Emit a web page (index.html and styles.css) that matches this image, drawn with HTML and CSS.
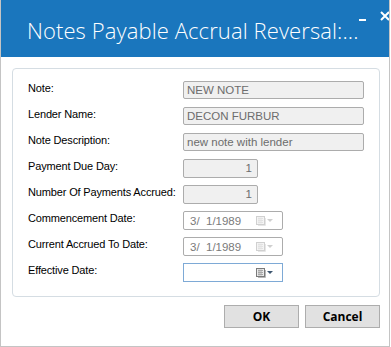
FILE: index.html
```html
<!DOCTYPE html>
<html>
<head>
<meta charset="utf-8">
<link rel="stylesheet" href="styles.css">
</head>
<body>
<div class="window">
  <div class="titlebar">
    <div class="title">Notes Payable Accrual Reversal:...</div>
    <div class="controls">
      <span class="min"></span>
      <svg class="close" width="10" height="10" viewBox="0 0 10 10"><path d="M1 1 L9 9 M9 1 L1 9" stroke="#fff" stroke-width="2"/></svg>
    </div>
  </div>
  <div class="content">
    <div class="group">
      <div class="row"><label>Note:</label><div class="field text wide">NEW NOTE</div></div>
      <div class="row"><label>Lender Name:</label><div class="field text wide">DECON FURBUR</div></div>
      <div class="row"><label>Note Description:</label><div class="field text wide">new note with lender</div></div>
      <div class="row"><label>Payment Due Day:</label><div class="field num">1</div></div>
      <div class="row"><label>Number Of Payments Accrued:</label><div class="field num">1</div></div>
      <div class="row"><label>Commencement Date:</label><div class="field date"><span class="dtext">3/&nbsp; 1/1989</span><svg class="cal" width="20" height="12" viewBox="0 0 20 12"><rect x="1.5" y="1.5" width="8" height="8" fill="#f4f4f4" stroke="#d0d0d0"/><path d="M3 3.5h5M3 5.5h5M3 7.5h5M4 2.5v6M6 2.5v6" stroke="#e2e2e2"/><path d="M10.5 3v7.5H3" stroke="#e6e6e6" fill="none"/><path d="M12 4h6l-3 3z" fill="#cfcfcf"/></svg></div></div>
      <div class="row"><label>Current Accrued To Date:</label><div class="field date"><span class="dtext">3/&nbsp; 1/1989</span><svg class="cal" width="20" height="12" viewBox="0 0 20 12"><rect x="1.5" y="1.5" width="8" height="8" fill="#f4f4f4" stroke="#d0d0d0"/><path d="M3 3.5h5M3 5.5h5M3 7.5h5M4 2.5v6M6 2.5v6" stroke="#e2e2e2"/><path d="M10.5 3v7.5H3" stroke="#e6e6e6" fill="none"/><path d="M12 4h6l-3 3z" fill="#cfcfcf"/></svg></div></div>
      <div class="row"><label>Effective Date:</label><div class="field date active"><span class="dtext"></span><svg class="cal" width="20" height="12" viewBox="0 0 20 12"><rect x="1.5" y="1.5" width="8" height="8" fill="#e9e9e9" stroke="#7a7a7a"/><path d="M3 3.5h5M3 5.5h5M3 7.5h5M4 2.5v6M6 2.5v6" stroke="#a8a8a8"/><path d="M10.5 3v7.5H3" stroke="#b8b8b8" fill="none"/><path d="M12 4h6l-3 3z" fill="#3e5670"/></svg></div></div>
    </div>
    <div class="buttons">
      <button class="btn">OK</button>
      <button class="btn">Cancel</button>
    </div>
  </div>
</div>
</body>
</html>
```
FILE: styles.css
```css
html, body {
  margin: 0;
  padding: 0;
  background: #ffffff;
  overflow: hidden;
}
body {
  width: 391px;
  height: 347px;
  font-family: "Liberation Sans", Arial, sans-serif;
}
.window {
  box-sizing: border-box;
  width: 390px;
  height: 347px;
  border: 1px solid #c4c4c4;
  border-top: none;
  background: #ffffff;
  overflow: hidden;
}
.titlebar {
  height: 57px;
  background: #1a76bd;
  display: flex;
  align-items: flex-start;
  justify-content: space-between;
}
.title {
  font-family: "Open Sans", sans-serif;
  font-weight: 300;
  font-size: 22px;
  color: #ffffff;
  padding: 15px 0 0 26px;
  white-space: nowrap;
  letter-spacing: 0.1px;
}
.controls {
  display: flex;
  align-items: flex-start;
  gap: 14px;
  padding: 11px 12px 0 0;
}
.min {
  display: block;
  width: 7px;
  height: 2px;
  background: #ffffff;
  margin-top: 8px;
}
.close {
  display: block;
}
.content {
  padding: 11px 9px 0 11px;
}
.group {
  box-sizing: border-box;
  width: 368px;
  height: 229px;
  border: 1px solid #d5dde3;
  border-radius: 4px;
  padding: 12px 0 0 15px;
  display: flex;
  flex-direction: column;
  gap: 8px;
}
.row {
  display: flex;
  align-items: flex-start;
  height: 18px;
}
.row label {
  width: 155px;
  flex: none;
  font-size: 11px;
  color: #000000;
  line-height: 14px;
  white-space: nowrap;
  letter-spacing: -0.15px;
}
.field {
  box-sizing: border-box;
  height: 18px;
  border: 1px solid #acacac;
  border-radius: 2px;
  background: #f0f0f0;
  color: #6d6d6d;
  font-size: 11.5px;
  line-height: 16px;
  padding: 0 3px;
  white-space: nowrap;
}
.wide {
  width: 181px;
}
.num {
  width: 75px;
  height: 19px;
  text-align: right;
  padding-right: 5px;
  line-height: 17px;
}
.date {
  width: 100px;
  height: 19px;
  background: #ffffff;
  display: flex;
  align-items: center;
  justify-content: space-between;
  padding: 0 7px 0 6px;
}
.date .dtext {
  color: #7a7a7a;
}
.date.active {
  border-color: #7eaad6;
  border-radius: 0;
}
.cal {
  display: block;
}
.buttons {
  display: flex;
  justify-content: flex-end;
  gap: 6px;
  width: 368px;
  margin-top: 8px;
}
.btn {
  box-sizing: border-box;
  width: 75px;
  height: 23px;
  border: 1px solid #adadad;
  background: #e1e1e1;
  font-family: "Open Sans", sans-serif;
  font-weight: 700;
  font-size: 12px;
  color: #000000;
  padding: 0;
}
```
